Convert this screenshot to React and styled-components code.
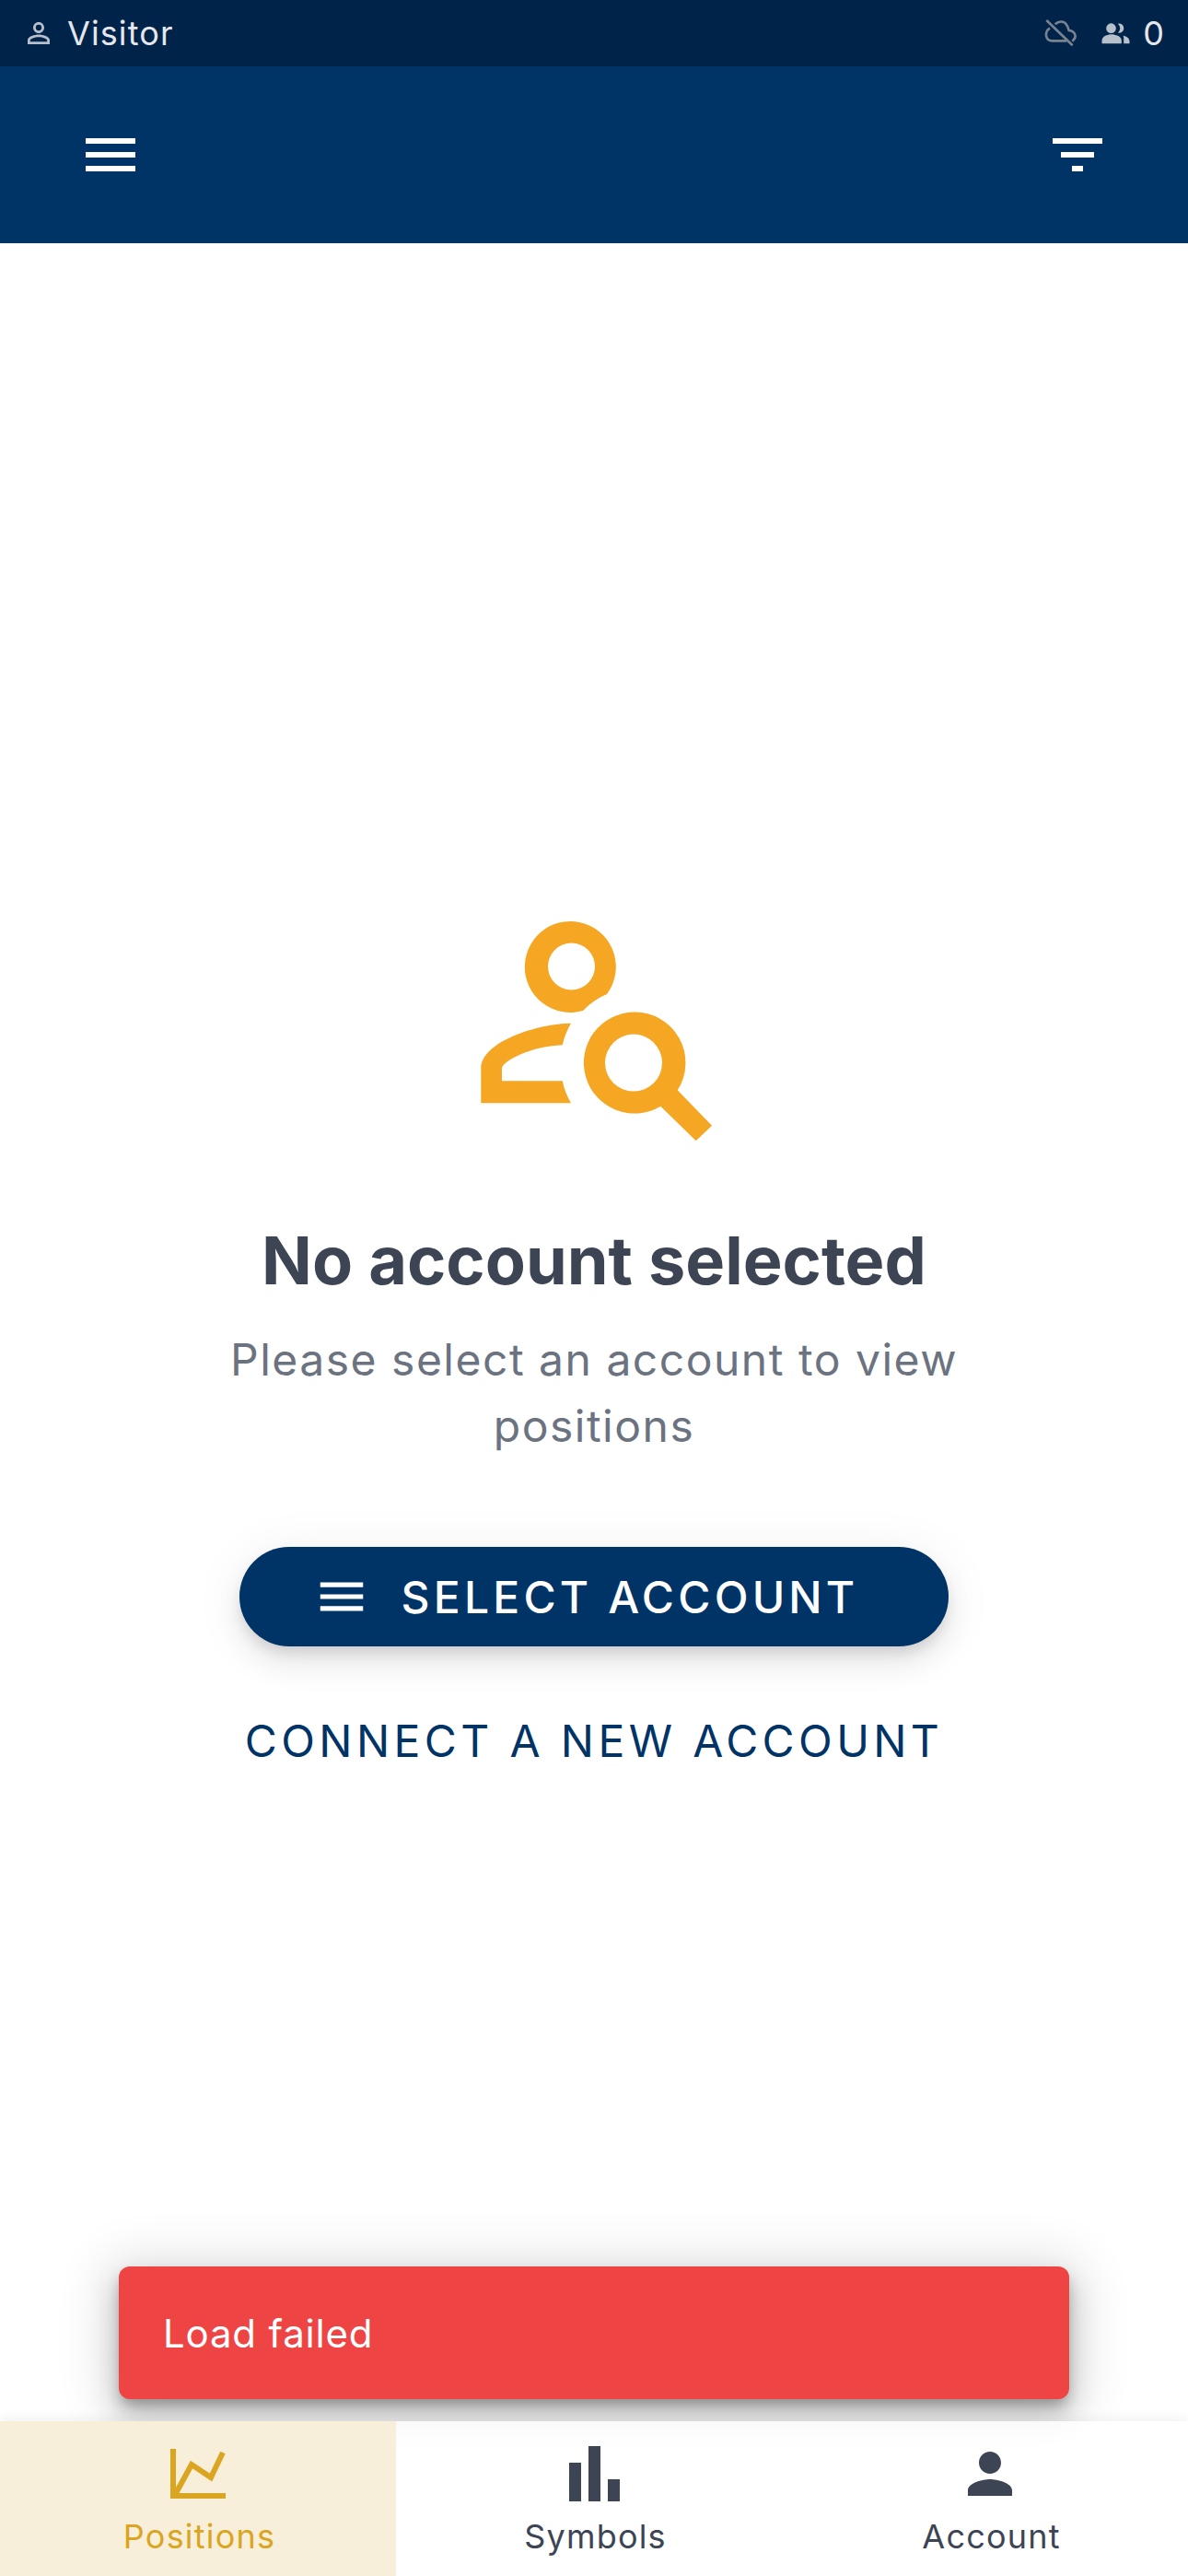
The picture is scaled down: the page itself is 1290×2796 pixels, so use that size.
import React from 'react'
import styled, { createGlobalStyle } from 'styled-components'
import { MdOutlinePersonOutline, MdPerson, MdMenu } from 'react-icons/md'

const GlobalStyle = createGlobalStyle`
  html, body {
    margin: 0;
    padding: 0;
    background: #fff;
  }
  * {
    box-sizing: border-box;
  }
  body {
    font-family: Inter, "Liberation Sans", sans-serif;
  }
`

const Screen = styled.div`
  width: 1290px;
  height: 2796px;
  display: flex;
  flex-direction: column;
  overflow: hidden;
`

const StatusBar = styled.div`
  height: 72px;
  flex: none;
  display: flex;
  align-items: center;
  justify-content: space-between;
  padding: 0 25px 0 24px;
  background: #00234a;
`

const StatusGroup = styled.div`
  display: flex;
  align-items: center;
`

const StatusText = styled.span`
  font-size: 36px;
  line-height: 1;
  letter-spacing: 1.1px;
  color: #e5e7eb;
  margin-left: ${({ $gap }) => $gap}px;
`

const StatusIcon = styled.span`
  display: flex;
  color: ${({ $dim }) => ($dim ? '#78838f' : '#b6bfca')};
  margin-left: ${({ $gap }) => $gap || 0}px;
`

const AppBar = styled.div`
  height: 192px;
  flex: none;
  display: flex;
  align-items: center;
  justify-content: space-between;
  padding: 0 84px;
  background: #003366;
  color: #fff;
`

const BarIcon = styled.svg`
  display: block;
  width: 72px;
  height: 72px;
  fill: currentColor;
`

const Main = styled.main`
  flex: 1;
  position: relative;
  display: flex;
  flex-direction: column;
  align-items: center;
  justify-content: center;
  padding-top: 8px;
  background: #fff;
`

const HeroIcon = styled.svg`
  display: block;
  width: 300px;
  height: 270px;
  fill: #f5a623;
`

const Title = styled.h1`
  margin: 75px 0 0;
  font-size: 72px;
  line-height: 86px;
  font-weight: 700;
  color: #3d4555;
`

const Subtitle = styled.p`
  width: 860px;
  margin: 29px 0 0;
  font-size: 48px;
  line-height: 72px;
  letter-spacing: 1.5px;
  text-align: center;
  color: #6b7280;
`

const SelectButton = styled.button`
  width: 770px;
  height: 108px;
  margin-top: 95px;
  padding: 0 18px 0 0;
  display: flex;
  align-items: center;
  justify-content: center;
  gap: 34px;
  border: 0;
  border-radius: 54px;
  background: #003366;
  color: #fff;
  font-family: inherit;
  font-size: 48px;
  font-weight: 500;
  letter-spacing: 4.2px;
  box-shadow: 0 9px 15px -3px rgba(0, 0, 0, 0.13), 0 18px 30px 3px rgba(0, 0, 0, 0.06), 0 6px 54px 6px rgba(0, 0, 0, 0.05);
`

const ConnectButton = styled.button`
  margin-top: 73px;
  padding: 0;
  border: 0;
  background: none;
  color: #003366;
  font-family: inherit;
  font-size: 48px;
  line-height: 60px;
  font-weight: 400;
  letter-spacing: 4.4px;
`

const Toast = styled.div`
  position: absolute;
  left: 129px;
  right: 129px;
  bottom: 24px;
  height: 144px;
  display: flex;
  align-items: center;
  padding: 0 48px;
  border-radius: 12px;
  background: #ef4444;
  color: #fff;
  font-size: 42px;
  letter-spacing: 0.8px;
  box-shadow: 0 9px 15px -3px rgba(0, 0, 0, 0.3), 0 18px 30px 3px rgba(0, 0, 0, 0.14), 0 6px 54px 15px rgba(0, 0, 0, 0.12);
`

const BottomNav = styled.nav`
  height: 168px;
  flex: none;
  position: relative;
  display: grid;
  grid-template-columns: repeat(3, 1fr);
  background: rgba(255, 255, 255, 0.8);
  box-shadow: 0 -3px 12px rgba(0, 0, 0, 0.06);
`

const Tab = styled.div`
  display: flex;
  flex-direction: column;
  align-items: center;
  padding-top: ${({ $top }) => $top}px;
  background: ${({ $active }) => ($active ? '#f8efdb' : 'transparent')};
  color: ${({ $active }) => ($active ? '#daa520' : '#3d4555')};
`

const TabIcon = styled.svg`
  display: block;
  flex: none;
  fill: currentColor;
`

const TabLabel = styled.span`
  position: absolute;
  top: 103px;
  margin-left: 3px;
  font-size: 36px;
  line-height: 44px;
  letter-spacing: 1.2px;
`

const Menu = () => (
  <BarIcon viewBox="0 0 24 24">
    <path d="M3 18h18v-2H3v2zm0-5h18v-2H3v2zm0-7v2h18V6H3z" />
  </BarIcon>
)

const Filter = () => (
  <BarIcon viewBox="0 0 24 24">
    <path d="M10 18h4v-2h-4v2zM3 6v2h18V6H3zm3 7h12v-2H6v2z" />
  </BarIcon>
)

const CloudOff = () => (
  <svg width="37" height="32" viewBox="25 24 111 96" fill="none" stroke="currentColor" strokeWidth="8" style={{ display: 'block' }}>
    <path d="M35 30 L120 112" />
    <path d="M63 43 C74 33 92 30 100 44 C105 51 107 58 108 63 C120 63 129 72 129 82 C129 88 125 93 119 98" />
    <path d="M46 56 C36 62 33 72 34 80 C36 91 44 97 54 97 H101" />
  </svg>
)

const Group = () => (
  <svg width="33" height="26" viewBox="212 25 98 78" fill="currentColor" style={{ display: 'block' }}>
    <circle cx="246" cy="48" r="16" />
    <path d="M268 33a15.5 15.5 0 1 1 0 30C273 58 275 53 275 48S273 38 268 33Z" />
    <path d="M216 98V88C216 74 235 68 247 68S280 74 280 88V98Z" />
    <path d="M285 72C296 74 306 80 306 90V98H287V88C287 82 288 77 285 72Z" />
  </svg>
)

const PersonSearch = () => (
  <HeroIcon viewBox="5 0 300 270">
    <path
      fillRule="evenodd"
      d="M169 99A49.5 49.5 0 1 0 143 117A80 80 0 0 1 169 99ZM130.5 43.5a25.5 25.5 0 1 0 0 51a25.5 25.5 0 1 0 0-51Z"
    />
    <path d="M130 130.7C95 131 32.3 150 32.3 180V217.3H130A80 80 0 0 1 120.7 193.3H55V180C55 172 85 156 120.7 154.3A80 80 0 0 1 130 130.7Z" />
    <path
      fillRule="evenodd"
      d="M198 118.6a55 55 0 1 0 29.3 102.1L265.7 258.3L283 241.7L245.7 203.3A55 55 0 0 0 198 118.6ZM198 142.6a31 31 0 1 1 0 62a31 31 0 1 1 0-62Z"
    />
  </HeroIcon>
)

const ChartIcon = () => (
  <TabIcon width="60" height="54" viewBox="0 0 60 54">
    <path d="M0 0h6v48h54v6H0z" />
    <path d="M5 50 L23 17 L44 31 L57 4" fill="none" stroke="currentColor" strokeWidth="6" />
  </TabIcon>
)

const BarsIcon = () => (
  <TabIcon width="55" height="60" viewBox="0 0 55 60">
    <rect x="0" y="18" width="13" height="42" />
    <rect x="21" y="0" width="13" height="60" />
    <rect x="42" y="36" width="13" height="24" />
  </TabIcon>
)

export default function App() {
  return (
    <Screen>
      <GlobalStyle />
      <StatusBar>
        <StatusGroup>
          <StatusIcon>
            <MdOutlinePersonOutline size={36} />
          </StatusIcon>
          <StatusText $gap={13}>Visitor</StatusText>
        </StatusGroup>
        <StatusGroup>
          <StatusIcon $dim>
            <CloudOff />
          </StatusIcon>
          <StatusIcon $gap={25}>
            <Group />
          </StatusIcon>
          <StatusText $gap={13}>0</StatusText>
        </StatusGroup>
      </StatusBar>

      <AppBar>
        <Menu />
        <Filter />
      </AppBar>

      <Main>
        <PersonSearch />
        <Title>No account selected</Title>
        <Subtitle>Please select an account to view positions</Subtitle>
        <SelectButton>
          <MdMenu size={62} />
          SELECT ACCOUNT
        </SelectButton>
        <ConnectButton>CONNECT A NEW ACCOUNT</ConnectButton>
        <Toast>Load failed</Toast>
      </Main>

      <BottomNav>
        <Tab $active $top={30}>
          <ChartIcon />
          <TabLabel>Positions</TabLabel>
        </Tab>
        <Tab $top={27}>
          <BarsIcon />
          <TabLabel>Symbols</TabLabel>
        </Tab>
        <Tab $top={21}>
          <MdPerson size={72} />
          <TabLabel>Account</TabLabel>
        </Tab>
      </BottomNav>
    </Screen>
  )
}
